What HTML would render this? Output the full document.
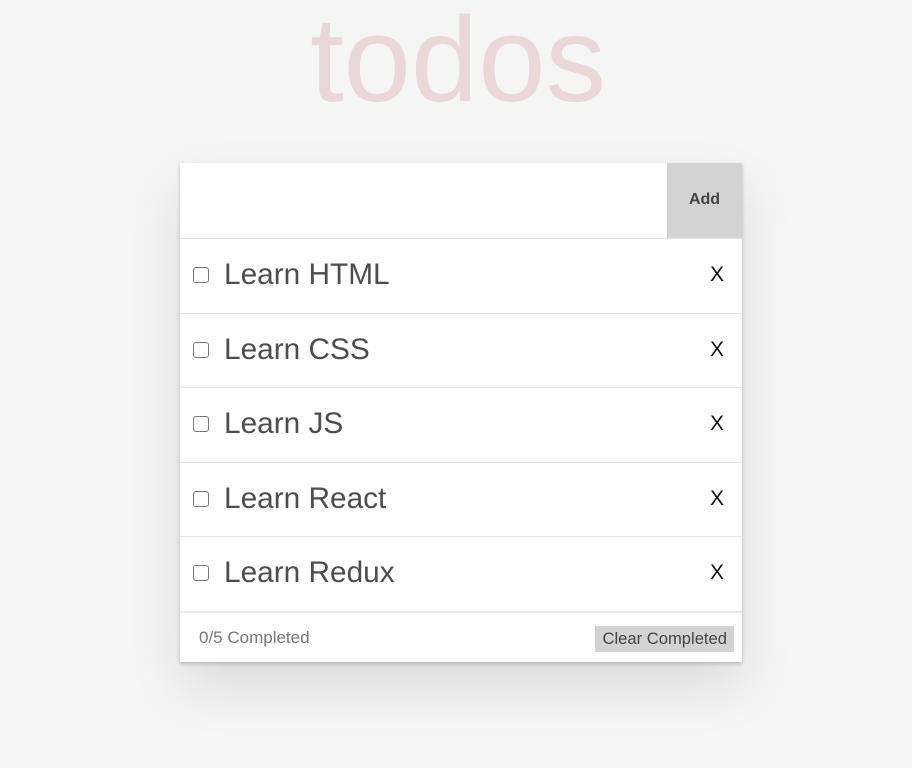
<!DOCTYPE html>
<html><head><style>
body{margin:0;width:912px;height:768px;background:#f5f5f5;font-family:"Liberation Sans",Arial,sans-serif;position:relative;overflow:hidden}
h1{position:absolute;left:0;right:0;top:-1px;margin:0;text-align:center;font-weight:normal;font-size:121px;line-height:1;color:#ead7d7;padding-left:4px}
.card{position:absolute;left:180px;top:163px;width:562px;background:#fff;box-shadow:0 2px 4px rgba(0,0,0,.2),0 25px 50px rgba(0,0,0,.1)}
.top{height:75px;border-bottom:1px solid #e6e6e6;position:relative}
.add{position:absolute;right:0;top:0;width:75px;height:75px;background:#d3d3d3;font-weight:bold;font-size:16px;color:#444;text-align:center;line-height:74px}
.row{height:73.5px;border-bottom:1px solid #e6e6e6;position:relative}
.cb{position:absolute;left:13px;top:28px;width:14px;height:14px;border:1.5px solid #777;border-radius:3px}
.t{position:absolute;left:44px;top:0;line-height:72px;font-size:29.8px;color:#4d4d4d}
.x{position:absolute;right:18px;top:0;line-height:72px;font-size:21px;color:#111}
.foot{height:49px;position:relative;border-top:1px solid #eee}
.cnt{position:absolute;left:19px;top:15px;font-size:17px;color:#777}
.clr{position:absolute;right:8px;top:13px;height:26px;line-height:25px;padding:0 7px;background:#d3d3d3;font-size:16.6px;color:#444}
</style></head><body>
<h1>todos</h1>
<div class="card">
<div class="top"><div class="add">Add</div></div>
<div class="row"><div class="cb"></div><div class="t">Learn HTML</div><div class="x">X</div></div>
<div class="row"><div class="cb"></div><div class="t">Learn CSS</div><div class="x">X</div></div>
<div class="row"><div class="cb"></div><div class="t">Learn JS</div><div class="x">X</div></div>
<div class="row"><div class="cb"></div><div class="t">Learn React</div><div class="x">X</div></div>
<div class="row"><div class="cb"></div><div class="t">Learn Redux</div><div class="x">X</div></div>
<div class="foot"><div class="cnt">0/5 Completed</div><div class="clr">Clear Completed</div></div>
</div>
</body></html>
